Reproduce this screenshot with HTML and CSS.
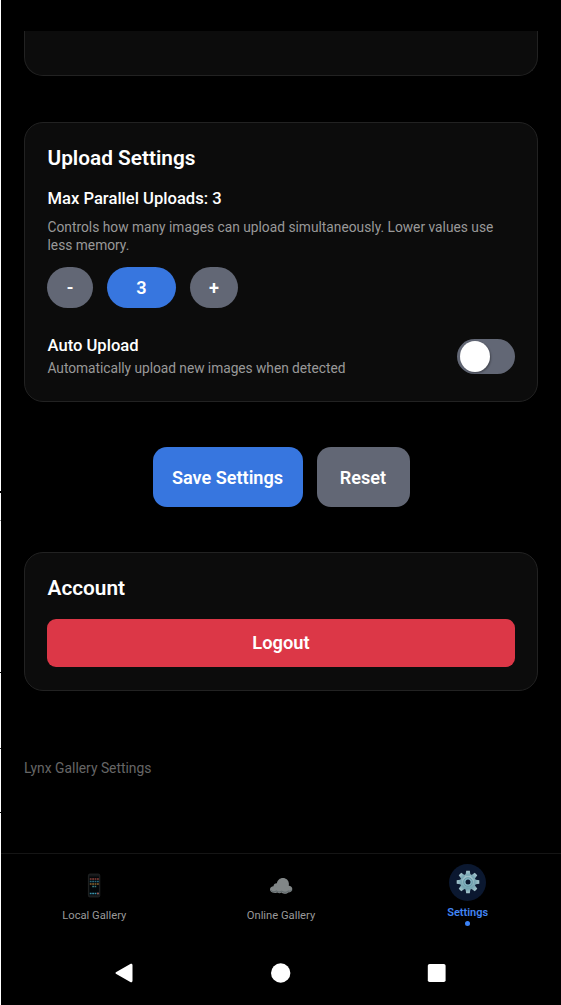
FILE: index.html
```html
<!DOCTYPE html>
<html lang="en">
<head>
<meta charset="utf-8">
<title>Lynx Gallery Settings</title>
<link rel="stylesheet" href="styles.css">
</head>
<body>
<div class="screen">
  <main class="content">
    <section class="card card-clipped"></section>
    <section class="card upload">
      <h2 class="card-title">Upload Settings</h2>
      <h3 class="label parallel">Max Parallel Uploads: 3</h3>
      <p class="hint hint-parallel">Controls how many images can upload simultaneously. Lower values use<br>less memory.</p>
      <div class="stepper">
        <button class="pill minus">-</button>
        <span class="pill value">3</span>
        <button class="pill plus">+</button>
      </div>
      <div class="auto-row">
        <div>
          <h3 class="label auto">Auto Upload</h3>
          <p class="hint hint-auto">Automatically upload new images when detected</p>
        </div>
        <div class="switch"><div class="knob"></div></div>
      </div>
    </section>
    <div class="actions">
      <button class="button save">Save Settings</button>
      <button class="button reset">Reset</button>
    </div>
    <section class="card account">
      <h2 class="card-title">Account</h2>
      <button class="logout">Logout</button>
    </section>
    <p class="footer">Lynx Gallery Settings</p>
  </main>
  <nav class="tabs">
    <div class="tab">
      <svg class="tab-icon" width="24" height="26" viewBox="0 0 24 26">
        <rect x="6.4" y="2" width="11.4" height="23" rx="1.5" fill="#15181a" stroke="#292c2d" stroke-width=".7"/>
        <rect x="7.3" y="4.5" width="9.6" height="18.5" fill="#020609"/>
        <g stroke-width="1.7" fill="none" stroke-dasharray="1.8 .6">
          <path d="M7.8 7h9" stroke="#8a4038"/><path d="M7.8 9.5h9" stroke="#27677b"/>
          <path d="M7.8 12h9" stroke="#8a632e"/><path d="M10.2 14.5h4" stroke="#397b7e"/>
          <path d="M7.8 21.5h9" stroke="#3c94ad"/>
        </g>
        <path d="M15 21.5h1.8" stroke="#a14d45" stroke-width="1.7"/>
      </svg>
      <span class="tab-label">Local Gallery</span>
    </div>
    <div class="tab">
      <svg class="tab-icon" width="26" height="26" viewBox="0 0 26 26">
        <path d="M6 20.7C3.6 20.7 2 19.3 2 17.4c0-1.8 1.5-3.1 3.5-3.1.1-1.9 1.5-3.2 3.4-3.1C9.5 8.3 11.8 6.1 14.9 6.1c3.3 0 5.8 2.3 6 5.6l-.1 2.1c2 .2 3.5 1.5 3.5 3.2 0 2.1-1.7 3.5-4.1 3.5-.9 1-2.2 1.5-3.9 1.3-1.4-.1-2.2-.6-2.8-1.2-1.4.9-3 .8-4.1-.1-.9.5-2.2.6-3.4.2z" fill="#818687"/>
        <path d="M3 18.3c1 1.5 3.5 1.7 5.5.7 1.6 1.3 3.5 1.2 5.2.1 2.2 1.5 5 1.3 6.5 0 1.7.3 3-.2 3.8-1.1" fill="none" stroke="#626b6e" stroke-width="1.1"/>
      </svg>
      <span class="tab-label">Online Gallery</span>
    </div>
    <div class="tab tab-active">
      <div class="tab-disc">
        <svg width="26" height="26" viewBox="-13 -13 26 26">
          <defs><linearGradient id="gear" x2="0" y2="1"><stop stop-color="#a7c6cd"/><stop offset="1" stop-color="#6fa1af"/></linearGradient></defs>
          <g fill="url(#gear)">
            <circle r="7.9"/>
            <path id="tooth" d="M-1.8-11.3h3.6l.8 5h-5.2z"/>
            <use href="#tooth" transform="rotate(45)"/><use href="#tooth" transform="rotate(90)"/>
            <use href="#tooth" transform="rotate(135)"/><use href="#tooth" transform="rotate(180)"/>
            <use href="#tooth" transform="rotate(225)"/><use href="#tooth" transform="rotate(270)"/>
            <use href="#tooth" transform="rotate(315)"/>
          </g>
          <circle r="4.3" fill="#86b7c4" stroke="#6799a7" stroke-width="1"/>
          <circle r="2.5" fill="#0b1830"/>
        </svg>
      </div>
      <span class="tab-label">Settings</span>
      <i class="dot"></i>
    </div>
  </nav>
  <div class="system-nav">
    <svg width="20" height="20" viewBox="0 0 20 20"><path d="M1.3 9 15.3 1c1.3-.7 2.2-.1 2.2 1.2v15.6c0 1.3-.9 1.9-2.2 1.2L1.3 11c-1.1-.6-1.1-1.4 0-2z" fill="#fff"/></svg>
    <svg width="20" height="20" viewBox="0 0 20 20"><circle cx="9.7" cy="10" r="9.7" fill="#fff"/></svg>
    <svg width="20" height="20" viewBox="0 0 20 20"><rect x=".8" y="1" width="17.8" height="18" rx="1.8" fill="#fff"/></svg>
  </div>
</div>
</body>
</html>
```
FILE: styles.css
```css
* { box-sizing: border-box; }
body { margin: 0; background: #000; font-family: Roboto, "Liberation Sans", sans-serif; color: #fff; }
h2, h3, p { margin: 0; }
button { border: 0; font-family: inherit; color: inherit; padding: 0; }
.screen {
  height: 1005px; display: flex; flex-direction: column; padding-left: 1px;
  background:
    linear-gradient(#000, #000) 0 491px / 1px 2px no-repeat,
    linear-gradient(#999, #999) 0 520px / 1px 1px no-repeat,
    linear-gradient(#000, #000) 0 672px / 1px 1px no-repeat,
    linear-gradient(#333, #333) 0 748px / 1px 1px no-repeat,
    linear-gradient(#000, #000) 0 812px / 1px 1px no-repeat,
    linear-gradient(90deg, #fff 1px, #000 1px);
}
.content { height: 853px; padding: 31px 23px 0; overflow: hidden; }
.card { background: #0c0c0c; border: 1px solid #222; border-radius: 19px; padding: 0 22px 0 22.5px; }
.card-clipped { height: 45px; border-top: 0; border-radius: 0 0 19px 19px; }
.upload { height: 280px; margin-top: 46px; padding-top: 22px; }
.card-title { font-size: 20.8px; line-height: 27px; font-weight: 600; }
.label { font-size: 16.6px; line-height: 22px; font-weight: 500; }
.parallel { margin-top: 16px; }
.hint { color: #999; font-size: 13.75px; line-height: 18px; white-space: nowrap; }
.hint-parallel { margin-top: 8px; letter-spacing: .01px; }
.stepper { display: flex; gap: 14px; margin-top: 13px; margin-left: -.5px; }
.pill { height: 41px; border-radius: 21px; background: #626775; font-size: 18.1px; font-weight: 600; display: grid; place-items: center; }
.minus { width: 46px; }
.value { width: 69px; background: #3776df; }
.plus { width: 48px; }
.auto-row { display: flex; justify-content: space-between; align-items: center; margin-top: 27px; }
.hint-auto { margin-top: 2px; letter-spacing: -.03px; }
.switch { width: 58px; height: 35px; border-radius: 18px; background: #626775; padding: 2px 3px; margin-top: 1px; }
.knob { width: 30px; height: 31px; border-radius: 50%; background: #fff; box-shadow: 1px 1px 2px #0005; }
.actions { display: flex; justify-content: center; gap: 14px; margin-top: 45px; }
.button { height: 60px; border-radius: 14px; font-size: 18.1px; font-weight: 600; }
.save { width: 150px; background: #3776df; }
.reset { width: 93px; background: #626775; }
.account { height: 139px; margin-top: 45px; padding-top: 22px; }
.logout { display: block; width: calc(100% + .5px); height: 48px; margin: 17px 0 0 -.5px; padding-bottom: 2px; border-radius: 9px; background: #dc3747; font-size: 18.3px; font-weight: 600; }
.footer { margin-top: 68px; color: #666; font-size: 13.85px; line-height: 18px; }
.tabs { height: 87px; border-top: 1px solid #151515; display: grid; grid-template-columns: repeat(3, 1fr); }
.tab { display: flex; flex-direction: column; align-items: center; padding-top: 18px; color: #999; }
.tab-label { font-size: 11.2px; line-height: 14px; margin-top: 11px; }
.tab-active { padding-top: 10px; color: #4285f4; }
.tab-disc { width: 37px; height: 37px; border-radius: 50%; background: #0b1830; display: grid; place-items: center; padding-bottom: 2px; }
.tab-active .tab-label { margin-top: 5px; font-weight: 600; font-size: 11px; }
.dot { width: 5px; height: 5px; border-radius: 50%; background: #3b82f6; margin-top: 1px; }
.system-nav { height: 65px; display: flex; gap: 136px; justify-content: center; padding-top: 23px; }
```
